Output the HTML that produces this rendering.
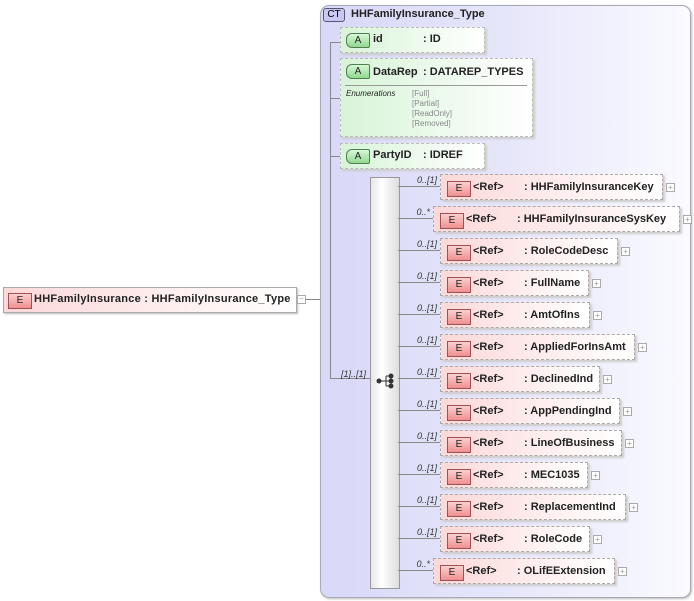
<!DOCTYPE html>
<html><head><style>
body{margin:0;width:694px;height:601px;position:relative;background:#fff;font-family:"Liberation Sans",sans-serif;overflow:hidden}
.a{position:absolute}
.ct{left:320px;top:5px;width:369px;height:591px;border:1px solid #a8a8b8;border-radius:9px;background:linear-gradient(to right,#d8d8f8,#e6e6fa 50%,#fafaff);box-shadow:1px 1px 2px #bbb}
.ln{position:absolute;background:#888}
.el{position:absolute;height:24px;border:1px dashed #aaa;background:linear-gradient(to right,#fcd8d8,#fff);box-shadow:2px 2px 2px #ccc;font-size:11px;font-weight:bold;color:#222}
.eb{position:absolute;left:6px;top:6px;width:22px;height:14px;border:1px solid #a05050;background:linear-gradient(#fbd0d0,#f09090);font-size:10px;font-weight:normal;text-align:center;line-height:14px;color:#222}
.el span{position:absolute;top:6px}
.pl{position:absolute;width:7px;height:7px;border:1px solid #aaa;background:#fff;font-size:8px;line-height:7px;text-align:center;color:#999}
.cd{position:absolute;font-size:9px;font-style:italic;color:#333;text-align:right;width:40px}
.at{position:absolute;border:1px dashed #bbb;background:linear-gradient(to right,#d8f4d8,#fff);box-shadow:2px 2px 2px #ccc;font-size:11px;font-weight:bold;color:#222}
.ab{position:absolute;left:5px;top:5px;width:22px;height:13px;border:1px solid #508050;border-radius:6px 2px 2px 6px;background:linear-gradient(#d8f8d8,#90d890);font-size:10px;font-weight:normal;text-align:center;line-height:13px}
</style></head><body>
<div class="a" style="left:3px;top:287px;width:292px;height:24px;border:1px solid #aaa;background:linear-gradient(to right,#fcd8d8,#fff);box-shadow:1px 1px 2px #bbb;font-size:11px;font-weight:bold;color:#222">
<div class="eb" style="left:4px;top:5px">E</div><span class="a" style="left:30px;top:5px;letter-spacing:0.25px">HHFamilyInsurance : HHFamilyInsurance_Type</span></div>
<div class="pl" style="left:297px;top:295px;line-height:5px">–</div>
<div class="ln" style="left:306px;top:299px;width:14px;height:1px"></div>
<div class="a ct"></div>
<div class="a" style="left:323px;top:8px;width:20px;height:12px;border:1px solid #557;border-radius:3px;background:#c8c8f0;font-size:10px;text-align:center;line-height:12px">CT</div>
<div class="a" style="left:351px;top:8px;font-size:11px;font-weight:bold;color:#222">HHFamilyInsurance_Type</div>
<div class="ln" style="left:330px;top:42px;width:1px;height:337px"></div>
<div class="ln" style="left:330px;top:42px;width:10px;height:1px"></div>
<div class="ln" style="left:330px;top:98px;width:10px;height:1px"></div>
<div class="ln" style="left:330px;top:156px;width:10px;height:1px"></div>
<div class="ln" style="left:330px;top:378px;width:40px;height:1px"></div>
<div class="cd" style="left:326px;top:369px">[1]..[1]</div>
<div class="at" style="left:340px;top:27px;width:143px;height:24px"><div class="ab">A</div><span class="a" style="left:32px;top:5px">id</span><span class="a" style="left:82px;top:5px">: ID</span></div>
<div class="at" style="left:340px;top:58px;width:191px;height:77px"><div class="ab">A</div><span class="a" style="left:32px;top:7px">DataRep</span><span class="a" style="left:82px;top:7px">: DATAREP_TYPES</span>
<div class="a" style="left:4px;top:26px;width:182px;height:1px;background:#999"></div>
<div class="a" style="left:5px;top:30px;font-size:8px;font-style:italic;font-weight:normal">Enumerations</div>
<div class="a" style="left:71px;top:30px;font-size:8px;font-weight:normal;color:#888;line-height:10px">[Full]<br>[Partial]<br>[ReadOnly]<br>[Removed]</div></div>
<div class="at" style="left:340px;top:143px;width:143px;height:24px"><div class="ab">A</div><span class="a" style="left:32px;top:5px">PartyID</span><span class="a" style="left:82px;top:5px">: IDREF</span></div>
<div class="a" style="left:370px;top:177px;width:28px;height:410px;border:1px solid #999;background:linear-gradient(to right,#e8e8e8,#fff 40%,#ddd)"></div>
<svg class="a" style="left:376px;top:373px" width="20" height="16"><g fill="#333" stroke="#333"><circle cx="3" cy="8" r="2"/><circle cx="15" cy="3" r="2"/><circle cx="15" cy="8" r="2"/><circle cx="15" cy="13" r="2"/><path d="M3 8H15M10 3V13M10 3H15M10 13H15" fill="none"/></g></svg>
<div id="els"></div>
<script>
var d=[["0..[1]","HHFamilyInsuranceKey",440,221],["0..*","HHFamilyInsuranceSysKey",433,245],["0..[1]","RoleCodeDesc",440,176],["0..[1]","FullName",440,147],["0..[1]","AmtOfIns",440,148],["0..[1]","AppliedForInsAmt",440,193],["0..[1]","DeclinedInd",440,158],["0..[1]","AppPendingInd",440,178],["0..[1]","LineOfBusiness",440,180],["0..[1]","MEC1035",440,146],["0..[1]","ReplacementInd",440,184],["0..[1]","RoleCode",440,148],["0..*","OLifEExtension",433,180]];
var h="";d.forEach(function(r,i){var t=174+i*32,l=r[2];
h+='<div class="ln" style="left:398px;top:'+(t+12)+'px;width:'+(l-398)+'px;height:1px"></div>';
h+='<div class="cd" style="left:'+(l-43)+'px;top:'+(t+1)+'px">'+r[0]+'</div>';
h+='<div class="el" style="left:'+l+'px;top:'+t+'px;width:'+r[3]+'px"><div class="eb">E</div><span style="left:32px">&lt;Ref&gt;</span><span style="left:83px">: '+r[1]+'</span></div>';
h+='<div class="pl" style="left:'+(l+r[3]+5)+'px;top:'+(t+9)+'px">+</div>';});
document.getElementById("els").innerHTML=h;
</script>
</body></html>
